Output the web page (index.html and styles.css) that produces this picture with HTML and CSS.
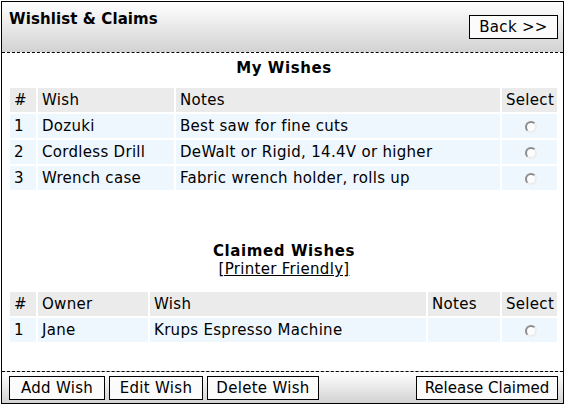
FILE: index.html
```html
<!DOCTYPE html>
<html>
<head>
<meta charset="utf-8">
<link rel="stylesheet" href="styles.css">
</head>
<body>
<div class="frame">
  <div class="header">
    <div class="title">Wishlist &amp; Claims</div>
    <button class="btn back">Back &gt;&gt;</button>
  </div>
  <div class="content">
    <h2 class="section-title">My Wishes</h2>
    <table class="grid wishes">
      <colgroup><col class="c-num"><col class="c-wish"><col class="c-notes"><col class="c-sel"></colgroup>
      <tr class="head"><td>#</td><td>Wish</td><td>Notes</td><td>Select</td></tr>
      <tr><td>1</td><td>Dozuki</td><td>Best saw for fine cuts</td><td class="sel"><span class="radio"></span></td></tr>
      <tr><td>2</td><td>Cordless Drill</td><td>DeWalt or Rigid, 14.4V or higher</td><td class="sel"><span class="radio"></span></td></tr>
      <tr><td>3</td><td>Wrench case</td><td>Fabric wrench holder, rolls up</td><td class="sel"><span class="radio"></span></td></tr>
    </table>
    <h2 class="section-title claimed-title">Claimed Wishes</h2>
    <div class="printer"><a href="#">[Printer Friendly]</a></div>
    <table class="grid claims">
      <colgroup><col class="c-num"><col class="c-owner"><col class="c-cwish"><col class="c-cnotes"><col class="c-sel"></colgroup>
      <tr class="head"><td>#</td><td>Owner</td><td>Wish</td><td>Notes</td><td>Select</td></tr>
      <tr><td>1</td><td>Jane</td><td>Krups Espresso Machine</td><td></td><td class="sel"><span class="radio"></span></td></tr>
    </table>
  </div>
  <div class="footer">
    <button class="btn add">Add Wish</button>
    <button class="btn edit">Edit Wish</button>
    <button class="btn delete">Delete Wish</button>
    <button class="btn release">Release Claimed</button>
  </div>
</div>
</body>
</html>
```
FILE: styles.css
```css
html, body {
  margin: 0;
  padding: 0;
  background: #fff;
}
body {
  font-family: "DejaVu Sans", Verdana, sans-serif;
  font-size: 15px;
  line-height: 18px;
  letter-spacing: 0.3px;
  color: #000;
}
.frame {
  margin: 1px;
  width: 561px;
  height: 401px;
  border: 1px solid #000;
  display: flex;
  flex-direction: column;
}
.header {
  height: 50px;
  flex: none;
  border-bottom: 1px dashed #000;
  background: linear-gradient(#ffffff, #d2d2d2);
  display: flex;
  justify-content: space-between;
  align-items: flex-start;
  padding: 0 5px 0 7px;
}
.title {
  font-weight: bold;
  letter-spacing: 0.1px;
  margin-top: 8px;
}
.btn {
  font-family: "DejaVu Sans", Verdana, sans-serif;
  font-size: 15px;
  line-height: 18px;
  letter-spacing: 0.3px;
  color: #000;
  background: #fbfbfb;
  border: 1px solid #000;
  border-radius: 0;
  box-sizing: border-box;
  height: 24px;
  padding: 0;
  margin: 0;
  text-align: center;
  flex: none;
}
.back {
  width: 89px;
  margin-top: 13px;
}
.add { width: 96px; }
.edit { width: 94px; }
.delete { width: 112px; }
.release {
  width: 142px;
  letter-spacing: 0;
  margin-left: auto;
}
.content {
  flex: 1;
  padding: 0 3px 0 6px;
}
.section-title {
  font-size: 15px;
  line-height: 18px;
  font-weight: bold;
  letter-spacing: 0.6px;
  text-align: center;
  margin: 6px 0 9px;
}
.claimed-title {
  margin: 50px 0 0;
}
.printer {
  text-align: center;
  margin-bottom: 12px;
}
.printer a {
  color: #000;
  text-decoration: underline;
}
.grid {
  border-collapse: separate;
  border-spacing: 2px;
  width: 551px;
  table-layout: fixed;
}
.grid td {
  height: 24px;
  padding: 0 4px;
  background: #eef6fe;
  white-space: nowrap;
  box-sizing: border-box;
}
.grid tr.head td {
  background: #ebebeb;
}
.c-num { width: 26px; }
.c-wish { width: 136px; }
.c-notes { width: 324px; }
.c-sel { width: 55px; }
.c-owner { width: 110px; }
.c-cwish { width: 276px; }
.c-cnotes { width: 72px; }
.sel {
  text-align: center;
}
.radio {
  display: inline-block;
  width: 12px;
  height: 12px;
  box-sizing: border-box;
  border-radius: 50%;
  background: #fcfcfc;
  border: 2px solid;
  border-color: #8c8c8c #ececec #ececec #8c8c8c;
  vertical-align: middle;
  margin-left: 2px;
}
.footer {
  height: 31px;
  flex: none;
  border-top: 1px dashed #000;
  background: linear-gradient(#ffffff, #d2d2d2);
  display: flex;
  align-items: center;
  gap: 4px;
  padding: 0 5px 0 7px;
}
```
